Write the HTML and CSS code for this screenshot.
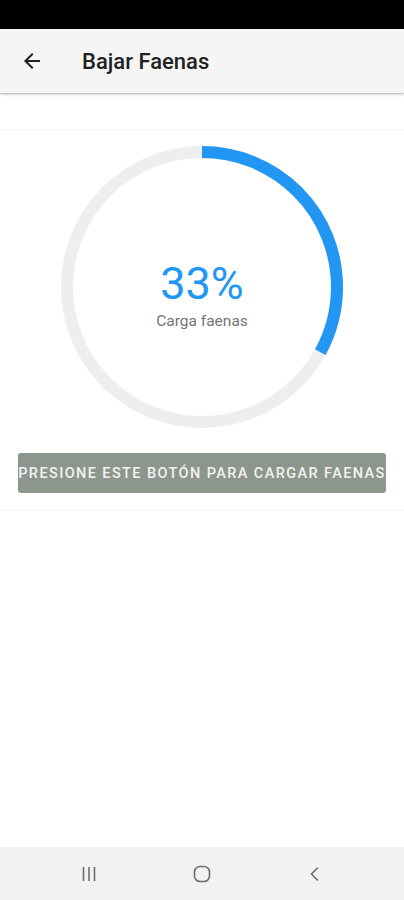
FILE: index.html
```html
<!DOCTYPE html>
<html lang="es">
<head>
<meta charset="utf-8">
<title>Bajar Faenas</title>
<link rel="stylesheet" href="styles.css">
</head>
<body>
<div class="screen">
  <div class="status-bar"></div>
  <header class="app-bar">
    <svg class="back" width="24" height="24" viewBox="0 0 24 24"><path d="M20 11H7.83l5.59-5.59L12 4l-8 8 8 8 1.41-1.41L7.83 13H20v-2z" fill="#212121"/></svg>
    <h1 class="title">Bajar Faenas</h1>
  </header>
  <main class="content">
    <section class="card">
      <div class="progress">
        <svg class="ring" width="282" height="282" viewBox="0 0 282 282">
          <circle cx="141" cy="141" r="135" fill="none" stroke="#eeeeee" stroke-width="12"/>
          <circle cx="141" cy="141" r="135" fill="none" stroke="#2196f3" stroke-width="12" stroke-dasharray="279.9 848.2" transform="rotate(-90 141 141)"/>
        </svg>
        <div class="progress-label">
          <div class="percent">33%</div>
          <div class="caption">Carga faenas</div>
        </div>
      </div>
      <button class="load-btn"><span>PRESIONE ESTE BOTÓN PARA CARGAR FAENAS</span></button>
    </section>
  </main>
  <nav class="nav-bar">
    <svg width="18" height="18" viewBox="0 0 18 18"><path d="M3.5 2v14M9 2v14M14.5 2v14" stroke="#6e6e6e" stroke-width="1.6" fill="none"/></svg>
    <svg width="20" height="20" viewBox="0 0 20 20"><rect x="2.5" y="2.5" width="15" height="15" rx="5.5" stroke="#6e6e6e" stroke-width="1.6" fill="none"/></svg>
    <svg width="18" height="18" viewBox="0 0 18 18"><path d="M11.5 3L5.5 9l6 6" stroke="#6e6e6e" stroke-width="1.6" fill="none" stroke-linecap="round"/></svg>
  </nav>
</div>
</body>
</html>
```

FILE: styles.css
```css
* { box-sizing: border-box; }
html, body { margin: 0; padding: 0; }
body {
  font-family: Roboto, "Noto Sans", "Liberation Sans", sans-serif;
  background: #ffffff;
}
.screen {
  width: 404px;
  height: 900px;
  display: flex;
  flex-direction: column;
  overflow: hidden;
}
.status-bar {
  height: 29px;
  background: #000;
  flex: none;
}
.app-bar {
  height: 64px;
  flex: none;
  background: #f5f5f5;
  display: flex;
  align-items: center;
  padding-left: 20px;
  box-shadow: 0 1px 2px rgba(0,0,0,0.25), 0 2px 4px rgba(0,0,0,0.08);
  position: relative;
  z-index: 1;
}
.back { flex: none; }
.title {
  margin: 0 0 0 38px;
  font-size: 22px;
  font-weight: 500;
  color: #212121;
}
.content {
  flex: 1;
  padding-top: 36px;
}
.card {
  border-top: 1px solid #f2f2f2;
  border-bottom: 1px solid #f2f2f2;
  padding: 16px 18px 17px 18px;
  display: flex;
  flex-direction: column;
  align-items: center;
}
.progress {
  width: 282px;
  height: 282px;
  display: grid;
  place-items: center;
}
.ring, .progress-label { grid-area: 1 / 1; }
.progress-label {
  text-align: center;
  padding-top: 16px;
}
.percent {
  font-size: 45px;
  line-height: 48px;
  color: #2196f3;
}
.caption {
  font-size: 15.5px;
  line-height: 18px;
  color: #757575;
  margin-top: 4px;
}
.load-btn {
  margin-top: 25px;
  width: 100%;
  height: 40px;
  border: none;
  border-radius: 3px;
  background: #8d968d;
  color: #f2f2f2;
  font-family: inherit;
  font-size: 14.5px;
  font-weight: 500;
  letter-spacing: 1.4px;
  padding: 0;
  overflow: hidden;
  white-space: nowrap;
  display: flex;
  justify-content: center;
  align-items: center;
}
.load-btn span { flex: none; }
.nav-bar {
  height: 53px;
  flex: none;
  background: #f2f2f2;
  display: flex;
  align-items: center;
  justify-content: center;
  gap: 94px;
}
```
